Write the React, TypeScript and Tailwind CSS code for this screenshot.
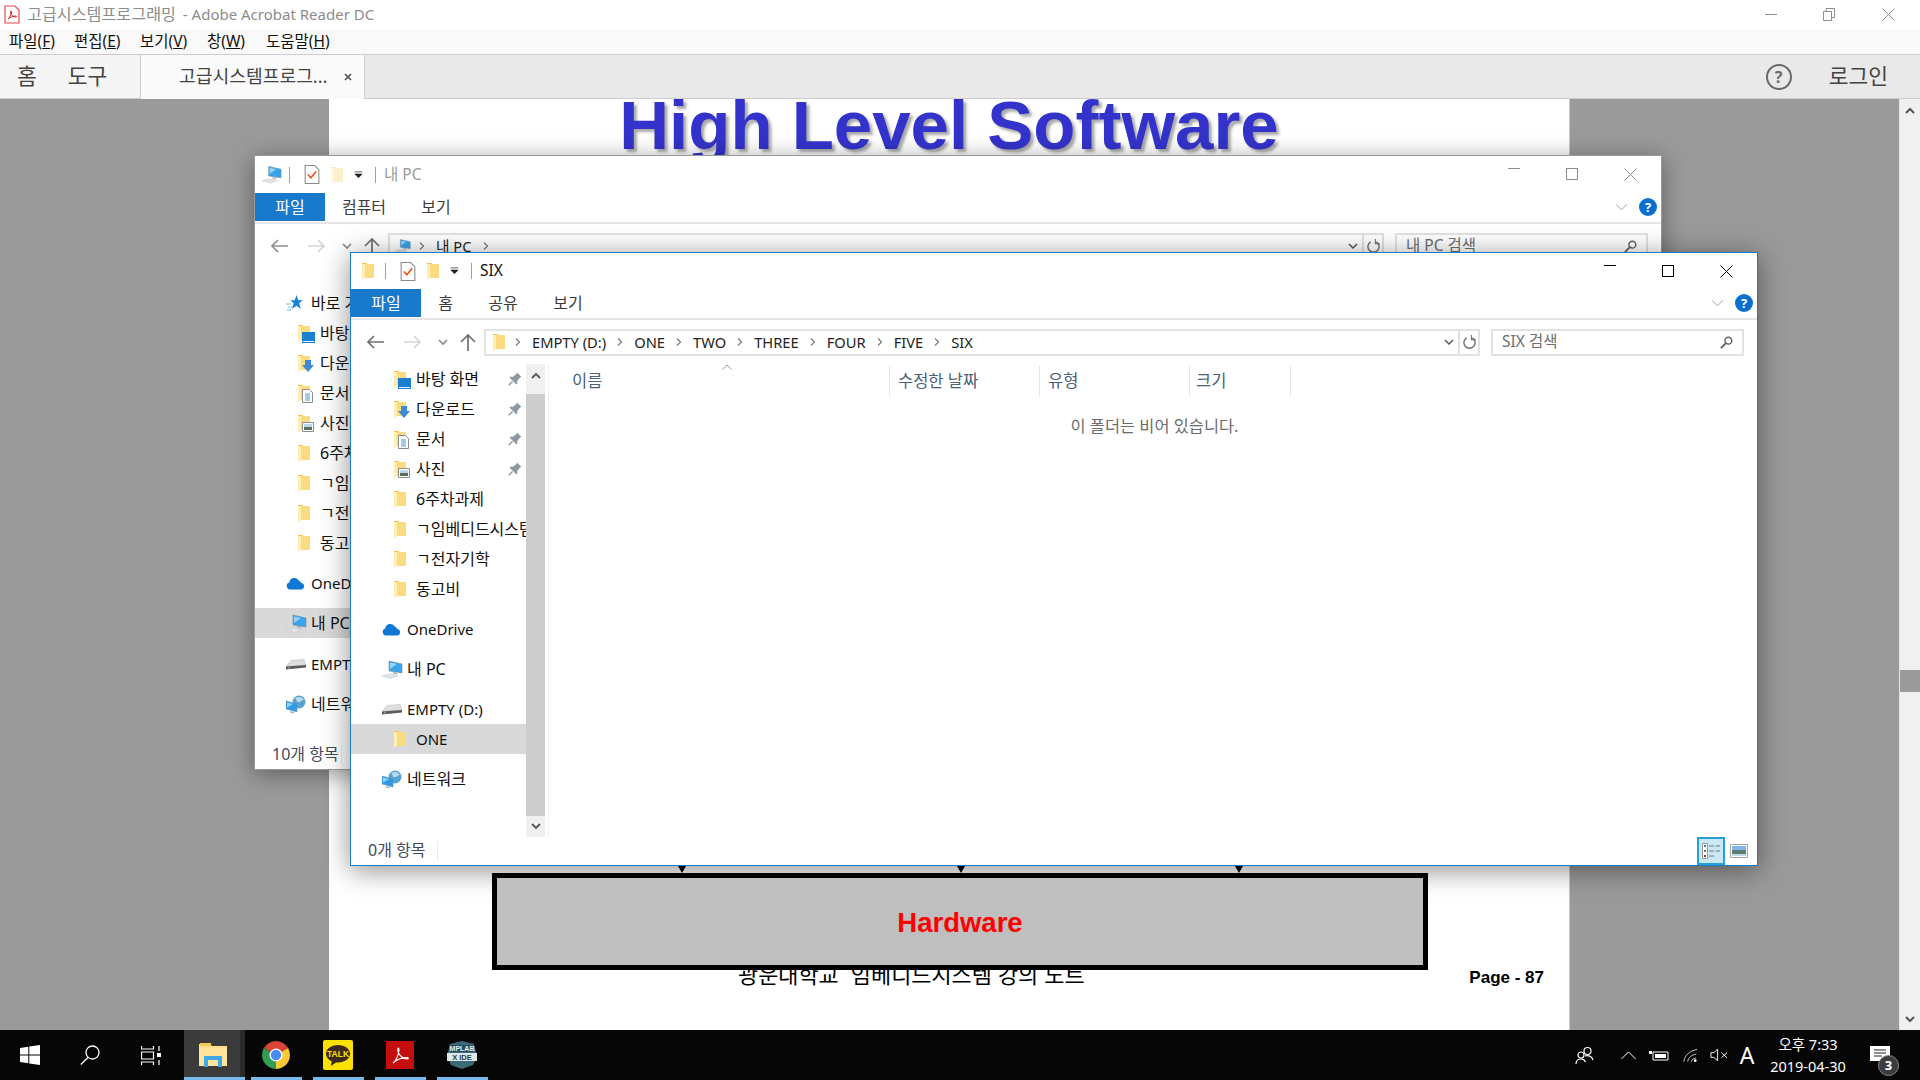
import { ReactNode } from "react";

type TreeRow = { label: string; icon: ReactNode; pin?: boolean; selected?: boolean; top?: boolean; latin?: boolean; gap?: string };

function Folder({ className = "w-[12px] h-[18px]" }: { className?: string }) {
  return (
    <svg viewBox="0 0 12 18" className={className}>
      <path d="M0 1h5v1h7v14H2l-2 2z" fill="#f6cf62" />
      <path d="M3 2h9v14H3z" fill="#fadb82" />
      <path d="M0 1h3v15l-3 2z" fill="#ffeeb0" />
      <path d="M0 1h3v1H0z" fill="#efbf4e" />
    </svg>
  );
}

function OverlayFolder({ children }: { children: ReactNode }) {
  return (
    <div className="relative w-[18px] h-[18px]">
      <Folder />
      <div className="absolute left-[4px] top-[5px]">{children}</div>
    </div>
  );
}

function DesktopBadge() {
  return (
    <svg viewBox="0 0 13 11" className="w-[13px] h-[11px] mt-[3px]">
      <path d="M0 0h13v11H0z" fill="#1a7fd0" />
      <path d="M1 9h11v1H1z" fill="#e8f2fb" />
    </svg>
  );
}

function DownloadBadge() {
  return (
    <svg viewBox="0 0 12 13" className="w-[12px] h-[13px]">
      <path d="M3 1h6v5h3l-6 7-6-7h3z" fill="#3b8ad6" />
    </svg>
  );
}

function DocBadge() {
  return (
    <svg viewBox="0 0 11 14" className="w-[11px] h-[14px]">
      <path d="M.5.5h7l3 3v10H.5z" fill="#fff" stroke="#8a8a8a" />
      <path d="M3 5h5M3 7h5M3 9h5M3 11h5" stroke="#3f95d8" />
    </svg>
  );
}

function PictureBadge() {
  return (
    <svg viewBox="0 0 12 10" className="w-[12px] h-[10px] mt-[3px]">
      <path d="M.5.5h11v9H.5z" fill="#fff" stroke="#8c8c8c" />
      <path d="M2 2h8v3H2z" fill="#b9d7ee" />
      <path d="M2 5h8v3H2z" fill="#55705f" />
    </svg>
  );
}

function Pin() {
  return (
    <svg viewBox="0 0 14 14" className="w-[14px] h-[14px]">
      <path d="M9 .5l4.500 4.500-1.500.5L9 9.500l.5 2-1 1L1.500 5.500l1-1 2 .5L8.500 2z" fill="#8d98a3" />
      <path d="M4.500 9.500L.800 13.200" stroke="#8d98a3" strokeWidth="1.400" />
    </svg>
  );
}

function PcIcon({ className = "w-[21px] h-[19px]" }: { className?: string }) {
  return (
    <svg viewBox="0 0 21 19" className={className}>
      <path d="M7 1l13 3v9L7 11z" fill="#3ba3ea" stroke="#6f8ea6" strokeWidth=".6" />
      <path d="M8 2.500l7 1.500-7 5z" fill="#8fd2fb" />
      <path d="M11 12l4 .8v1.700l-4-.8z" fill="#a9b4bb" />
      <path d="M0 16l7-2 9 1.700-7 2.800z" fill="#e2e4e6" stroke="#c0c4c7" strokeWidth=".5" />
    </svg>
  );
}

function CloudIcon() {
  return (
    <svg viewBox="0 0 19 13" className="w-[19px] h-[13px]">
      <path d="M4 12.500a3.500 3.500 0 0 1-.6-6.900A5 5 0 0 1 12.800 3.600 3.600 3.600 0 0 1 15.200 6 3.300 3.300 0 0 1 15.500 12.500z" fill="#0f78d4" />
    </svg>
  );
}

function DriveIcon() {
  return (
    <svg viewBox="0 0 20 11" className="w-[20px] h-[11px]">
      <path d="M5 1.500L18 .5l2 5.500L0 7.500z" fill="#dedede" stroke="#b5b5b5" strokeWidth=".5" />
      <path d="M0 7.500L20 6v2.500L0 10.500z" fill="#5a5a5a" />
      <path d="M2 8.500h2v1H2z" fill="#7ddc6a" />
    </svg>
  );
}

function NetworkIcon() {
  return (
    <svg viewBox="0 0 20 19" className="w-[20px] h-[19px]">
      <circle cx="13" cy="7" r="6.500" fill="#5aa3cf" />
      <path d="M9 3c3-2 7-1 9 2-3 0-3 3-6 2-2-.5-1-3-3-4z" fill="#b7dcef" />
      <path d="M0 6l11 3v8L0 14z" fill="#2f9be6" stroke="#6f8ea6" strokeWidth=".5" />
      <path d="M1 7.500l6 1.600-6 3.500z" fill="#8fd2fb" />
      <path d="M4 16l4 1v1.500l-4-1z" fill="#a9b4bb" />
    </svg>
  );
}

function StarIcon() {
  return (
    <svg viewBox="0 0 17 16" className="w-[17px] h-[16px]">
      <path d="M10.500 0l1.800 5.200H17l-3.800 3.100 1.500 5.700-4.200-3.300L6 14l1.700-5.700L4.500 5.200h4.200z" fill="#1882d8" />
      <path d="M0 9h5M2 12h4M1 15h4" stroke="#6bb7ef" strokeWidth="1.200" />
    </svg>
  );
}

function Help() {
  return <div className="w-[18px] h-[18px] rounded-full bg-[#0a6fd0] text-white text-[13px] leading-[18px] font-bold text-center">?</div>;
}

function Chevron({ className = "w-[8px] h-[8px]", stroke = "#7a7a7a" }: { className?: string; stroke?: string }) {
  return (
    <svg viewBox="0 0 8 8" className={className}>
      <path d="M2 .5L5.500 4 2 7.500" fill="none" stroke={stroke} strokeWidth="1.200" />
    </svg>
  );
}

function ExplorerWindow(props: {
  active?: boolean;
  title: string;
  titleIcon: ReactNode;
  tabs: { label: string; width: string }[];
  crumbIcon: ReactNode;
  crumbs: string[];
  trailing?: boolean;
  search: string;
  tree: TreeRow[];
  status: string;
  position: string;
}) {
  const { active } = props;
  const line = active ? "#000000" : "#8c8c8c";
  return (
    <div
      className={`absolute w-[1408px] flex flex-col bg-white border ${props.position} ${
        active ? "h-[614px] border-[#1a7cc9] shadow-[0_4px_26px_rgba(0,0,0,0.45)]" : "h-[615px] border-[#9a9a9a] shadow-[0_4px_22px_rgba(0,0,0,0.4)]"
      }`}
    >
      <div className={`flex items-center shrink-0 ${active ? "h-[36px]" : "h-[37px]"}`}>
        <div className="ml-[7px] w-[20px] flex justify-center">{props.titleIcon}</div>
        <div className="ml-[7px] w-px h-[16px] bg-[#a0a0a0]" />
        <svg viewBox="0 0 14 18" className="ml-[14px] w-[16px] h-[19px]">
          <path d="M.5.5h9l4 4v13H.5z" fill="#fff" stroke="#8a8a8a" />
          <path d="M3 9l3 3 5-6" fill="none" stroke="#e8541c" strokeWidth="1.600" />
        </svg>
        <div className={`ml-[11px] ${active ? "" : "opacity-40"}`}>
          <Folder />
        </div>
        <svg viewBox="0 0 10 8" className="ml-[11px] w-[9px] h-[8px]">
          <path d="M1 .5h8M1 3h8L5 7z" fill="#222" stroke="#222" strokeWidth=".8" />
        </svg>
        <div className="ml-[12px] w-px h-[16px] bg-[#a0a0a0]" />
        <span className={`ml-[8px] text-[15.500px] ${active ? "text-[#111]" : "text-[#9a9a9a]"}`}>{props.title}</span>
        <div className="ml-auto flex mr-[2px]">
          <div className="w-[58px] flex justify-center">
            <div className="w-[12px] h-px" style={{ background: line }} />
          </div>
          <div className="w-[58px] flex justify-center">
            <div className="w-[12px] h-[12px] border" style={{ borderColor: line }} />
          </div>
          <div className="w-[58px] flex justify-center">
            <svg viewBox="0 0 13 13" className="w-[13px] h-[13px]">
              <path d="M.5.500l12 12M12.500.500l-12 12" stroke={line} strokeWidth="1" />
            </svg>
          </div>
        </div>
      </div>

      <div className="h-[31px] flex border-b-2 border-[#e6e6e6] shrink-0 text-[16px] text-[#3b3b3b]">
        <div className="w-[70px] h-[28px] bg-[#1979ca] text-white flex items-center justify-center">파일</div>
        {props.tabs.map((t) => (
          <div key={t.label} className={`h-[28px] flex items-center justify-center ${t.width}`}>
            {t.label}
          </div>
        ))}
        <div className="ml-auto h-[28px] flex items-center mr-[4px]">
          <svg viewBox="0 0 14 8" className="w-[13px] h-[8px] mr-[11px]">
            <path d="M1 1l6 6 6-6" fill="none" stroke="#9a9a9a" />
          </svg>
          <Help />
        </div>
      </div>

      <div className="h-[44px] flex items-center shrink-0">
        <svg viewBox="0 0 18 14" className="ml-[15px] w-[18px] h-[14px]">
          <path d="M18 7H2M8 1L2 7l6 6" fill="none" stroke={active ? "#6f6f6f" : "#8d8d8d"} strokeWidth="1.700" />
        </svg>
        <svg viewBox="0 0 18 14" className="ml-[20px] w-[18px] h-[14px]">
          <path d="M0 7h16M10 1l6 6-6 6" fill="none" stroke="#d5d5d5" strokeWidth="1.700" />
        </svg>
        <svg viewBox="0 0 10 7" className="ml-[16px] w-[10px] h-[7px]">
          <path d="M1 1l4 4 4-4" fill="none" stroke="#888" strokeWidth="1.600" />
        </svg>
        <svg viewBox="0 0 16 18" className="ml-[12px] w-[16px] h-[18px]">
          <path d="M8 18V2M1 9l7-7 7 7" fill="none" stroke="#6f6f6f" strokeWidth="1.700" />
        </svg>
        <div className="ml-[8px] w-[996px] h-[27px] border-2 border-[#e2e2e2] flex items-center text-[14.700px] text-[#222]">
          <div className="ml-[5px] w-[16px] flex justify-center">{props.crumbIcon}</div>
          <div className="flex items-center ml-[7px]">
            {props.crumbs.map((c) => (
              <div key={c} className="flex items-center">
                <Chevron />
                <span className="mx-[10px]">{c}</span>
              </div>
            ))}
            {props.trailing && <Chevron />}
          </div>
          <svg viewBox="0 0 10 7" className="ml-auto mr-[4px] w-[10px] h-[7px]">
            <path d="M1 1l4 4 4-4" fill="none" stroke="#555" strokeWidth="1.500" />
          </svg>
          <div className="w-[20px] h-full border-l-2 border-[#e2e2e2] flex items-center justify-center">
            <svg viewBox="0 0 14 16" className="w-[13px] h-[15px]">
              <path d="M4 3a6 6 0 1 0 6 0" fill="none" stroke="#707070" strokeWidth="1.500" />
              <path d="M9 0v5h5" fill="none" stroke="#707070" strokeWidth="1.200" />
            </svg>
          </div>
        </div>
        <div className="ml-[11px] w-[253px] h-[27px] border-2 border-[#e2e2e2] flex items-center text-[15.500px] text-[#6d6d6d] pl-[9px]">
          <span>{props.search}</span>
          <svg viewBox="0 0 14 14" className="ml-auto mr-[9px] w-[13px] h-[13px]">
            <circle cx="9" cy="5" r="3.700" fill="none" stroke="#5f5f5f" strokeWidth="1.500" />
            <path d="M6 8l-5 5" stroke="#5f5f5f" strokeWidth="2" />
          </svg>
        </div>
      </div>

      <div className="flex-1 flex min-h-0">
        <div className="w-[175px] shrink-0 overflow-hidden text-[#111]">
          {props.tree.map((r) => (
            <div
              key={r.label}
              className={`h-[30px] flex items-center whitespace-nowrap ${r.latin ? "text-[15px]" : "text-[16px]"} ${r.gap ?? ""} ${r.selected ? "bg-[#d9d9d9]" : ""} ${r.top ? "pl-[31px]" : "pl-[43px]"}`}
            >
              <div className={r.top ? "w-[25px] shrink-0 flex items-center" : "w-[22px] shrink-0 flex items-center"}>{r.icon}</div>
              <span>{r.label}</span>
              {r.pin && (
                <div className="ml-auto mr-[4px]">
                  <Pin />
                </div>
              )}
            </div>
          ))}
        </div>
        <div className="w-[19px] shrink-0 flex flex-col bg-[#cdcdcd]">
          <div className="h-[30px] bg-[#f0f0f0] flex justify-center pt-[8px]">
            <svg viewBox="0 0 10 7" className="w-[10px] h-[7px]">
              <path d="M1 6l4-4 4 4" fill="none" stroke="#555" strokeWidth="1.800" />
            </svg>
          </div>
          <div className="flex-1" />
          <div className="h-[21px] bg-[#f0f0f0] flex items-center justify-center">
            <svg viewBox="0 0 10 7" className="w-[10px] h-[7px]">
              <path d="M1 1l4 4 4-4" fill="none" stroke="#555" strokeWidth="1.800" />
            </svg>
          </div>
        </div>
        <div className="ml-[3px] flex-1 border-l border-[#f0f0f0] min-w-0">
          <div className="h-[32px] flex text-[16.500px] text-[#4c607a] relative pt-[2px]">
            <div className="w-[341px] border-r border-[#e5e5e5] pl-[23px] flex items-center">이름</div>
            <svg viewBox="0 0 10 6" className="absolute left-[173px] top-[0px] w-[10px] h-[6px]">
              <path d="M.5 5.500L5 1l4.500 4.500" fill="none" stroke="#9a9a9a" />
            </svg>
            <div className="w-[150px] border-r border-[#e5e5e5] pl-[8px] flex items-center">수정한 날짜</div>
            <div className="w-[150px] border-r border-[#e5e5e5] pl-[8px] flex items-center">유형</div>
            <div className="w-[101px] border-r border-[#e5e5e5] pl-[6px] flex items-center">크기</div>
          </div>
          <p className="mt-[18px] pl-[3px] text-center text-[16.400px] text-[#6d6d6d]">이 폴더는 비어 있습니다.</p>
        </div>
      </div>

      <div className="h-[28px] flex items-center shrink-0 text-[16px] text-[#3f4a5a]">
        <div className="pl-[17px] w-[87px] leading-[18px] border-r border-[#ececec] pb-[2px]">{props.status}</div>
        <div className="ml-auto h-full w-[28px] border-2 border-[#26a0da] bg-[#cbe8f6] flex items-center justify-center">
          <svg viewBox="0 0 18 16" className="w-[18px] h-[16px]">
            <path d="M.5.500h5v15h-5z" fill="#fff" stroke="#9a9a9a" />
            <path d="M2 2h2v2H2z" fill="#3b7d9a" />
            <path d="M2 7h2v2H2z" fill="#7a6b4c" />
            <path d="M2 12h2v2H2z" fill="#c02a1a" />
            <path d="M7 3h5M13.500 3h5M7 8h5M13.500 8h5M7 13h5" stroke="#777" />
          </svg>
        </div>
        <svg viewBox="0 0 18 14" className="ml-[5px] mr-[9px] w-[18px] h-[14px]">
          <path d="M.5.500h17v13H.5z" fill="#fff" stroke="#a5a5a5" />
          <path d="M2 2h14v4H2z" fill="#7fb4ec" />
          <path d="M2 6h14v4H2z" fill="#5d7f70" />
          <path d="M2 10h14v2H2z" fill="#c4d8df" />
        </svg>
      </div>
    </div>
  );
}

const quickAccess: TreeRow[] = [
  { label: "바탕 화면", pin: true, icon: <OverlayFolder><DesktopBadge /></OverlayFolder> },
  { label: "다운로드", pin: true, icon: <OverlayFolder><DownloadBadge /></OverlayFolder> },
  { label: "문서", pin: true, icon: <OverlayFolder><DocBadge /></OverlayFolder> },
  { label: "사진", pin: true, icon: <OverlayFolder><PictureBadge /></OverlayFolder> },
  { label: "6주차과제", icon: <Folder /> },
  { label: "ㄱ임베디드시스템", icon: <Folder /> },
  { label: "ㄱ전자기학", icon: <Folder /> },
  { label: "동고비", icon: <Folder /> },
];

const frontTree: TreeRow[] = [
  ...quickAccess,
  { label: "OneDrive", latin: true, top: true, gap: "mt-[10px]", icon: <CloudIcon /> },
  { label: "내 PC", top: true, gap: "mt-[10px]", icon: <PcIcon /> },
  { label: "EMPTY (D:)", latin: true, top: true, gap: "mt-[10px]", icon: <DriveIcon /> },
  { label: "ONE", latin: true, selected: true, icon: <Folder /> },
  { label: "네트워크", top: true, gap: "mt-[10px]", icon: <NetworkIcon /> },
];

const backTree: TreeRow[] = [
  { label: "바로 가기", top: true, gap: "mt-[20px]", icon: <StarIcon /> },
  ...quickAccess,
  { label: "OneDrive", latin: true, top: true, gap: "mt-[10px]", icon: <CloudIcon /> },
  { label: "내 PC", top: true, gap: "mt-[10px]", selected: true, icon: <PcIcon /> },
  { label: "EMPTY (D:)", latin: true, top: true, gap: "mt-[11px]", icon: <DriveIcon /> },
  { label: "네트워크", top: true, gap: "mt-[10px]", icon: <NetworkIcon /> },
];

function MenuItem({ label, hot, width }: { label: string; hot: string; width: string }) {
  return (
    <span className={width}>
      {label}(<span className="underline">{hot}</span>)
    </span>
  );
}

function PdfPage() {
  return (
    <div className="relative w-[1241px] h-full bg-white overflow-hidden border-r border-[#c8c8c8]">
      <h1 className="-mt-[13px] text-center text-[69px] leading-[80px] font-bold text-[#3333cc] font-['Liberation_Sans',sans-serif] [text-shadow:3px_3px_3px_#a8a8a8]">
        High Level Software
      </h1>
      <div className="mt-[700px] ml-[163px] w-[936px] flex pl-[186px] pr-[185px] justify-between h-[7px]">
        {[0, 1, 2].map((i) => (
          <svg key={i} viewBox="0 0 8 7" className="w-[8px] h-[7px]">
            <path d="M0 0h8L4 7z" fill="#000" />
          </svg>
        ))}
      </div>
      <div className="relative z-10 ml-[163px] w-[936px] h-[97px] border-[5px] border-black bg-[#bfbfbf] flex items-center justify-center">
        <span className="pt-[3px] text-[27.500px] font-bold text-[#ff0000] font-['Liberation_Sans',sans-serif]">Hardware</span>
      </div>
      <div className="-mt-[10px] flex items-center font-['Liberation_Sans','Noto_Sans_CJK_KR',sans-serif] text-black">
        <span className="ml-[409px] text-[21.900px] whitespace-pre">광운대학교  임베디드시스템 강의 노트</span>
        <span className="ml-auto mr-[25px] mt-[2px] text-[17px] font-bold">Page - 87</span>
      </div>
    </div>
  );
}

function ChromeIcon() {
  return (
    <svg viewBox="0 0 24 24" className="w-[28px] h-[28px]">
      <path d="M1.610 6A12 12 0 0 1 22.390 6L12 12Z" fill="#db4437" />
      <path d="M22.390 6A12 12 0 0 1 12 24L12 12Z" fill="#fcc934" />
      <path d="M12 24A12 12 0 0 1 1.610 6L12 12Z" fill="#2f9e52" />
      <circle cx="12" cy="12" r="5.600" fill="#fff" />
      <circle cx="12" cy="12" r="4.400" fill="#4a8af4" />
    </svg>
  );
}

function Taskbar() {
  const apps = [
    <ChromeIcon key="chrome" />,
    <div key="talk" className="w-[30px] h-[30px] rounded-[2px] bg-[#fae100] flex items-center justify-center">
      <svg viewBox="0 0 30 30" className="w-[30px] h-[30px]">
        <path d="M15 5c-6.600 0-12 3.800-12 8.700 0 3.200 2.300 6 5.700 7.500L8 26l5-3.600h2c6.600 0 12-3.800 12-8.700S21.600 5 15 5z" fill="#3c2a1e" />
        <text x="15" y="17" textAnchor="middle" fontSize="8.500" fontWeight="700" fill="#fae100" fontFamily="Liberation Sans">TALK</text>
      </svg>
    </div>,
    <div key="adobe" className="w-[28px] h-[28px] bg-[#c40d0d] flex items-center justify-center">
      <svg viewBox="0 0 24 24" className="w-[24px] h-[24px]">
        <path d="M5 20c3-2 5.500-8 6-13 .2-2.500-1.500-2.500-1.300 0 .4 4.500 4.300 8.500 9.300 9 1.800.2 1.800-1.400 0-1.400-4 0-10 1.600-14 5.400z" fill="none" stroke="#fff" strokeWidth="1.100" />
      </svg>
    </div>,
    <svg key="mplab" viewBox="0 0 30 28" className="w-[30px] h-[28px]">
      <path d="M15 0l12 3 3 12-4 9-11 4-11-4-4-9L3 3z" fill="#3c6b78" />
      <path d="M4 4h22v7H4z" fill="#2b4f5a" />
      <text x="15" y="10" textAnchor="middle" fontSize="7" fontWeight="700" fill="#e6eef0" fontFamily="Liberation Sans">MPLAB</text>
      <path d="M0 12h30v8H0z" fill="#dfe7e9" />
      <text x="15" y="19" textAnchor="middle" fontSize="7.500" fontWeight="700" fill="#24424c" fontFamily="Liberation Sans">X IDE</text>
    </svg>,
  ];
  return (
    <div className="h-[50px] shrink-0 bg-[#060606] flex text-white">
      <div className="w-[60px] flex items-center justify-center">
        <svg viewBox="0 0 20 20" className="w-[20px] h-[20px]">
          <path d="M0 3l8.300-1.200v7.700H0zM9.300 1.600L20 0v9.500H9.300zM0 10.500h8.300v7.700L0 17zM9.300 10.500H20V20L9.300 18.400z" fill="#fff" />
        </svg>
      </div>
      <div className="w-[60px] flex items-center justify-center">
        <svg viewBox="0 0 20 20" className="w-[20px] h-[20px]">
          <circle cx="12.500" cy="7.500" r="6.500" fill="none" stroke="#fff" strokeWidth="1.300" />
          <path d="M8 12.500L.8 19.500" stroke="#fff" strokeWidth="1.300" />
        </svg>
      </div>
      <div className="w-[62px] flex items-center justify-center">
        <svg viewBox="0 0 20 19" className="w-[20px] h-[19px]">
          <path d="M.5 0v3h12V0M.5 6h12v7H.5zM.5 19v-3h12v3M18 0v5M18 14v5" fill="none" stroke="#fff" strokeWidth="1.200" />
          <path d="M16 7h4v4h-4z" fill="#fff" />
        </svg>
      </div>
      <div className="ml-[2px] w-[61px] relative flex">
        <div className="w-[56px] bg-[#3b3b3b] flex items-center justify-center pb-[1px] pl-[2px]">
          <svg viewBox="0 0 28 25" className="w-[28px] h-[25px]">
            <path d="M0 2h11l2 2h15v20H0z" fill="#ffe08f" />
            <path d="M1 1h11v3H1z" fill="#f6c65a" />
            <path d="M0 6h28v18H0z" fill="#ffe59c" />
            <path d="M5 25V14h18v11h-4v-7H9v7z" fill="#3fa9e6" />
          </svg>
        </div>
        <div className="w-[5px] bg-[#2a2a2a]" />
        <div className="absolute bottom-0 inset-x-0 h-[3px] bg-[#76b9ed]" />
      </div>
      <div className="flex gap-[11px] ml-[6px]">
        {apps.map((a, i) => (
          <div key={i} className="w-[51px] relative flex items-center justify-center pb-[1px] pr-[2px]">
            {a}
            <div className="absolute bottom-0 inset-x-0 h-[3px] bg-[#76b9ed]" />
          </div>
        ))}
      </div>

      <div className="ml-auto flex items-center">
        <svg viewBox="0 0 20 20" className="w-[20px] h-[20px]">
          <circle cx="12.500" cy="6" r="3.500" fill="none" stroke="#fff" strokeWidth="1.200" />
          <circle cx="6" cy="10" r="3" fill="none" stroke="#fff" strokeWidth="1.200" />
          <path d="M1 19c0-3 2-5 5-5s4 1.500 4.500 3M10 11c3-1 7 0 8 4" fill="none" stroke="#fff" strokeWidth="1.200" />
        </svg>
        <svg viewBox="0 0 18 10" className="ml-[25px] w-[17px] h-[9px]">
          <path d="M1 9l8-8 8 8" fill="none" stroke="#fff" strokeWidth="1.100" />
        </svg>
        <svg viewBox="0 0 20 12" className="ml-[12px] w-[20px] h-[12px]">
          <path d="M4 3h15v8H4z" fill="none" stroke="#fff" />
          <path d="M6 5h11v4H6z" fill="#fff" />
          <path d="M0 2h3v3H0z" fill="#fff" />
        </svg>
        <svg viewBox="0 0 16 15" className="ml-[14px] w-[15px] h-[15px]">
          <path d="M1 14C1.500 8 6 3 15 1M5 14c.5-4 4-7 9-8M9 14c.3-2 2-3.500 5-4" fill="none" stroke="#d0d0d0" strokeWidth="1" />
          <circle cx="13" cy="13" r="1.500" fill="#fff" />
        </svg>
        <svg viewBox="0 0 20 14" className="ml-[12px] w-[19px] h-[14px]">
          <path d="M1 4.500h3L8 1v12L4 9.500H1z" fill="none" stroke="#fff" />
          <path d="M12 4.500l6 5.500M18 4.500L12 10" stroke="#fff" />
        </svg>
        <span className="ml-[8px] w-[20px] text-[23px] leading-none text-center font-['Noto_Sans',sans-serif]">A</span>
        <div className="ml-[7px] w-[88px] text-center text-[14.500px] leading-[22px]">
          <div>오후 7:33</div>
          <div>2019-04-30</div>
        </div>
        <div className="w-[68px] relative flex pl-[18px]">
          <svg viewBox="0 0 20 18" className="w-[20px] h-[18px]">
            <path d="M0 0h20v15H0z" fill="#fff" />
            <path d="M4 4h12M4 7h12M4 10h8" stroke="#222" />
          </svg>
          <div className="absolute left-[26px] top-[9px] w-[21px] h-[21px] rounded-full bg-[#3c3c3c] border border-[#888] text-[13px] leading-[19px] font-bold text-center">3</div>
        </div>
      </div>
    </div>
  );
}

export default function App() {
  return (
    <div className="relative w-[1920px] h-[1080px] overflow-hidden flex flex-col bg-white font-['Noto_Sans','Noto_Sans_CJK_KR',sans-serif]">
      <div className="h-[29px] shrink-0 flex items-center bg-white">
        <svg viewBox="0 0 16 19" className="ml-[4px] w-[16px] h-[19px]">
          <path d="M1 1h10l4 4v13H1z" fill="#fff" stroke="#e64a4a" strokeWidth="1.200" />
          <path d="M4 14c2-2 3-4 3.500-7 0-1.500-1-1.500-1 0 .3 3 3 5 5.500 5 1 0 1-1 0-1-2.500 0-5.500 1-8 3z" fill="none" stroke="#d62a2a" />
        </svg>
        <span className="ml-[7px] text-[16.200px] text-[#8c8c8c]">고급시스템프로그래밍</span>
        <span className="ml-[3px] text-[15px] text-[#8c8c8c] whitespace-pre"> - Adobe Acrobat Reader DC</span>
        <div className="ml-auto flex items-center mr-[2px]">
          <div className="w-[58px] flex justify-center">
            <div className="w-[12px] h-px bg-[#8c8c8c]" />
          </div>
          <div className="w-[58px] flex justify-center">
            <svg viewBox="0 0 12 13" className="w-[12px] h-[13px]">
              <path d="M.5 3.500h8v9h-8zM3 3.500V.5h8.500v9H8.500" fill="none" stroke="#8c8c8c" />
            </svg>
          </div>
          <div className="w-[60px] flex justify-center">
            <svg viewBox="0 0 13 13" className="w-[13px] h-[13px]">
              <path d="M.5.500l12 12M12.500.500l-12 12" stroke="#8c8c8c" />
            </svg>
          </div>
        </div>
      </div>

      <div className="h-[26px] shrink-0 flex items-center bg-[#f9f9f9] border-b border-[#cdcdcd] pl-[9px] text-[15.500px] text-[#111]">
        <MenuItem label="파일" hot="F" width="w-[65px]" />
        <MenuItem label="편집" hot="E" width="w-[66px]" />
        <MenuItem label="보기" hot="V" width="w-[67px]" />
        <MenuItem label="창" hot="W" width="w-[59px]" />
        <MenuItem label="도움말" hot="H" width="w-[80px]" />
      </div>

      <div className="h-[44px] shrink-0 flex bg-[#e9e9e9] border-b border-[#cdcdcd] text-[#444]">
        <div className="w-[140px] bg-[#f5f5f5] flex items-center pl-[17px] gap-[31px] text-[21.500px]">
          <span>홈</span>
          <span>도구</span>
        </div>
        <div className="w-[225px] h-[44px] bg-[#fafafa] border-x border-[#cdcdcd] flex items-center pl-[38px] text-[18.200px]">
          <span>고급시스템프로그...</span>
          <svg viewBox="0 0 8 8" className="ml-[17px] w-[8px] h-[8px]">
            <path d="M1 1l6 6M7 1L1 7" stroke="#555" strokeWidth="1.700" />
          </svg>
        </div>
        <div className="ml-auto flex items-center">
          <div className="w-[26px] h-[26px] rounded-full border-2 border-[#6a6a6a] flex items-center justify-center text-[16px] font-bold text-[#6a6a6a]">?</div>
          <span className="ml-[37px] mr-[32px] text-[21.500px]">로그인</span>
        </div>
      </div>

      <div className="flex-1 flex min-h-0">
        <div className="flex-1 bg-[#9a9a9a] flex justify-center min-w-0">
          <PdfPage />
        </div>
        <div className="w-[21px] bg-[#f0f0f0] border-l border-[#e4e4e4] flex flex-col items-center">
          <svg viewBox="0 0 10 7" className="mt-[8px] w-[10px] h-[7px]">
            <path d="M1 6l4-4 4 4" fill="none" stroke="#555" strokeWidth="2" />
          </svg>
          <div className="mt-[556px] w-full h-[22px] bg-[#9a9a9a]" />
          <svg viewBox="0 0 10 7" className="mt-auto mb-[7px] w-[10px] h-[7px]">
            <path d="M1 1l4 4 4-4" fill="none" stroke="#555" strokeWidth="2" />
          </svg>
        </div>
      </div>

      <Taskbar />

      <ExplorerWindow
        title="내 PC"
        titleIcon={<PcIcon />}
        tabs={[
          { label: "컴퓨터", width: "w-[78px]" },
          { label: "보기", width: "w-[66px]" },
        ]}
        crumbIcon={<PcIcon className="w-[17px] h-[16px]" />}
        crumbs={["내 PC"]}
        trailing
        search="내 PC 검색"
        tree={backTree}
        status="10개 항목"
        position="left-[254px] top-[155px]"
      />
      <ExplorerWindow
        active
        title="SIX"
        titleIcon={<Folder />}
        tabs={[
          { label: "홈", width: "w-[49px]" },
          { label: "공유", width: "w-[66px]" },
          { label: "보기", width: "w-[64px]" },
        ]}
        crumbIcon={<Folder />}
        crumbs={["EMPTY (D:)", "ONE", "TWO", "THREE", "FOUR", "FIVE", "SIX"]}
        search="SIX 검색"
        tree={frontTree}
        status="0개 항목"
        position="left-[350px] top-[252px]"
      />
    </div>
  );
}
